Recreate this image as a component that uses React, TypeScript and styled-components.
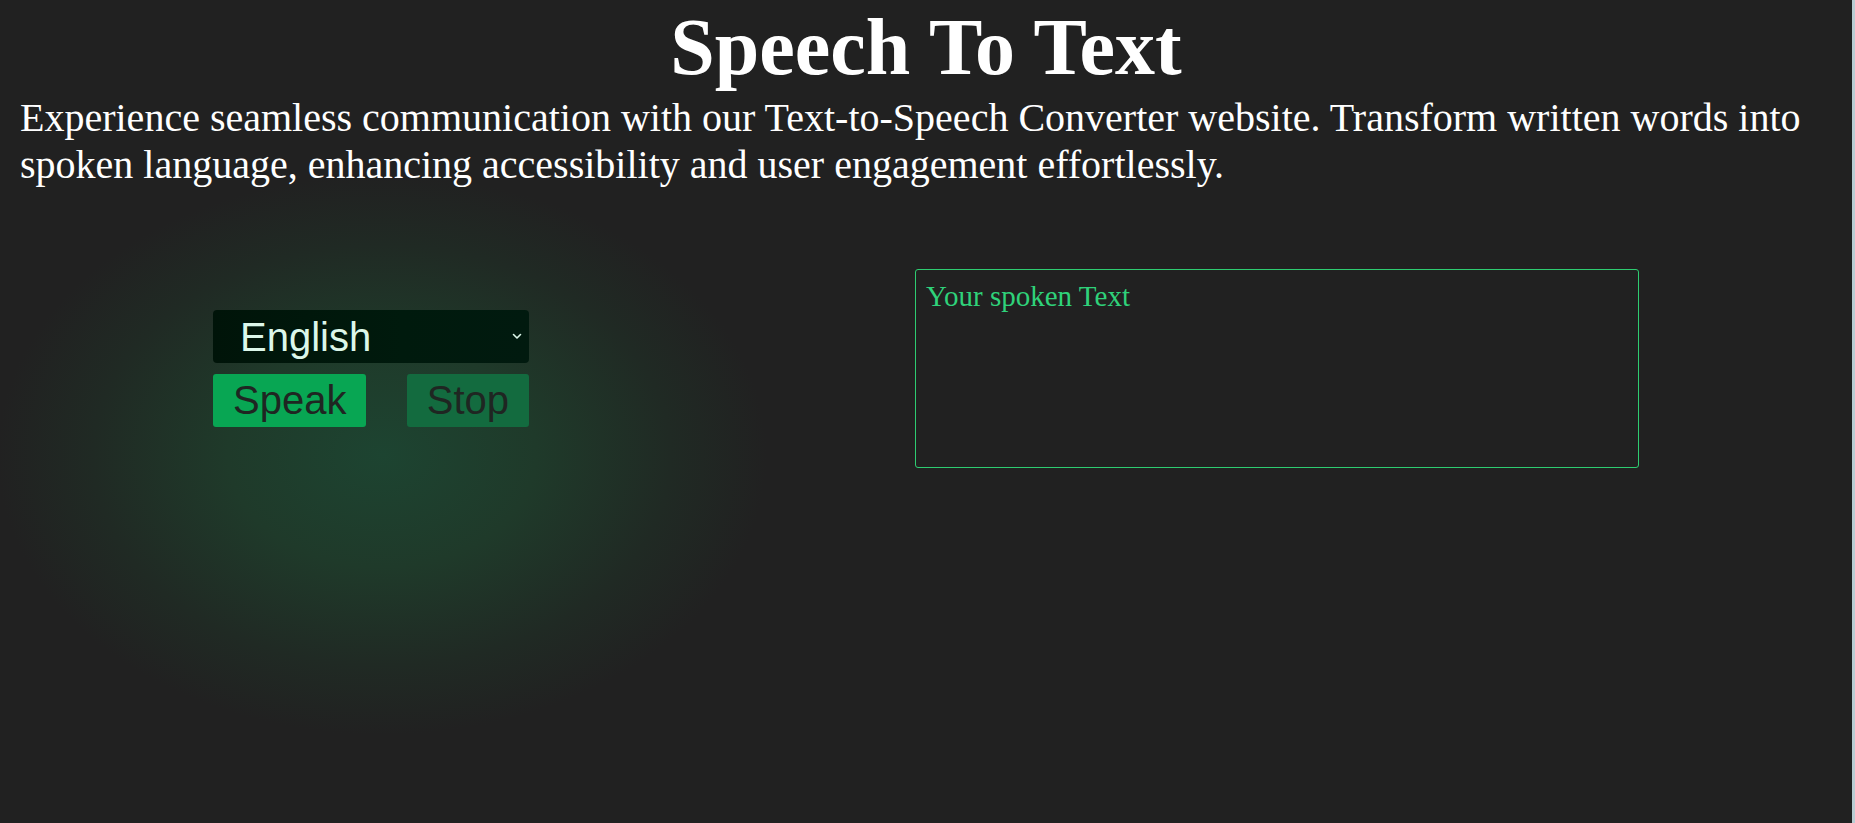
import React from "react";
import styled, { createGlobalStyle } from "styled-components";

const GlobalStyle = createGlobalStyle`
  html {
    background: #b9cdd3;
  }
  body {
    margin: 0 3px 0 0;
    min-height: 100vh;
    background:
      radial-gradient(ellipse 385px 280px at 382px 455px, #1d4431 0%, #1f3a2a 40%, #202a24 75%, rgba(33,33,33,0) 100%),
      #212121;
    font-family: "Liberation Serif", "Times New Roman", serif;
    color: #ffffff;
  }
  * { box-sizing: border-box; }
`;

const Page = styled.main`
  padding: 0 20px;
`;

const Title = styled.h1`
  margin: 0;
  font-size: 80px;
  line-height: 94px;
  font-weight: bold;
  text-align: center;
  color: #ffffff;
`;

const Intro = styled.p`
  margin: 0;
  font-size: 40px;
  color: #ffffff;
`;

const Workspace = styled.section`
  display: flex;
  justify-content: space-around;
  align-items: center;
  margin-top: 81px;
`;

const Controls = styled.div`
  display: flex;
  flex-direction: column;
  gap: 11px;
  width: 316px;
`;

const SelectWrap = styled.div`
  position: relative;
  width: 100%;
  height: 53px;
`;

const LanguageSelect = styled.select`
  appearance: none;
  -webkit-appearance: none;
  width: 100%;
  height: 53px;
  border: none;
  border-radius: 4px;
  padding: 0 30px 0 27px;
  background: linear-gradient(90deg, #001409 0%, #001a0d 60%, #011a0f 100%);
  color: #dcf7ea;
  font-family: "Liberation Sans", Arial, sans-serif;
  font-size: 40px;
  outline: none;
`;

const Chevron = styled.svg`
  position: absolute;
  right: 7px;
  top: 23px;
  width: 10px;
  height: 7px;
  pointer-events: none;
`;

const ButtonRow = styled.div`
  display: flex;
  justify-content: space-between;
`;

const ActionButton = styled.button<{ $muted?: boolean }>`
  height: 53px;
  padding: 0 20px;
  border: none;
  border-radius: 3px;
  background: ${(p) => (p.$muted ? "#136b3f" : "#08a653")};
  color: #1f2622;
  font-family: "Liberation Sans", Arial, sans-serif;
  font-size: 40px;
  line-height: 53px;
  cursor: pointer;
`;

const Transcript = styled.textarea`
  width: 724px;
  height: 199px;
  padding: 10px;
  border: 1px solid #2ecc71;
  border-radius: 3px;
  background: transparent;
  color: #2ecc71;
  font-family: "Liberation Serif", "Times New Roman", serif;
  font-size: 29px;
  resize: none;
  outline: none;
  &::placeholder {
    color: #2fd27a;
    opacity: 1;
  }
`;

export default function App() {
  return (
    <>
      <GlobalStyle />
      <Page>
        <Title>Speech To Text</Title>
        <Intro>
          Experience seamless communication with our Text-to-Speech Converter website. Transform
          written words into spoken language, enhancing accessibility and user engagement
          effortlessly.
        </Intro>
        <Workspace>
          <Controls>
            <SelectWrap>
              <LanguageSelect defaultValue="en">
                <option value="en">English</option>
                <option value="hi">Hindi</option>
              </LanguageSelect>
              <Chevron viewBox="0 0 10 7" aria-hidden="true">
                <path d="M1.5 1.5 L5 5 L8.5 1.5" fill="none" stroke="#dcf7ea" strokeWidth="1.6" strokeLinecap="round" strokeLinejoin="round" />
              </Chevron>
            </SelectWrap>
            <ButtonRow>
              <ActionButton>Speak</ActionButton>
              <ActionButton $muted>Stop</ActionButton>
            </ButtonRow>
          </Controls>
          <Transcript placeholder="Your spoken Text" />
        </Workspace>
      </Page>
    </>
  );
}
